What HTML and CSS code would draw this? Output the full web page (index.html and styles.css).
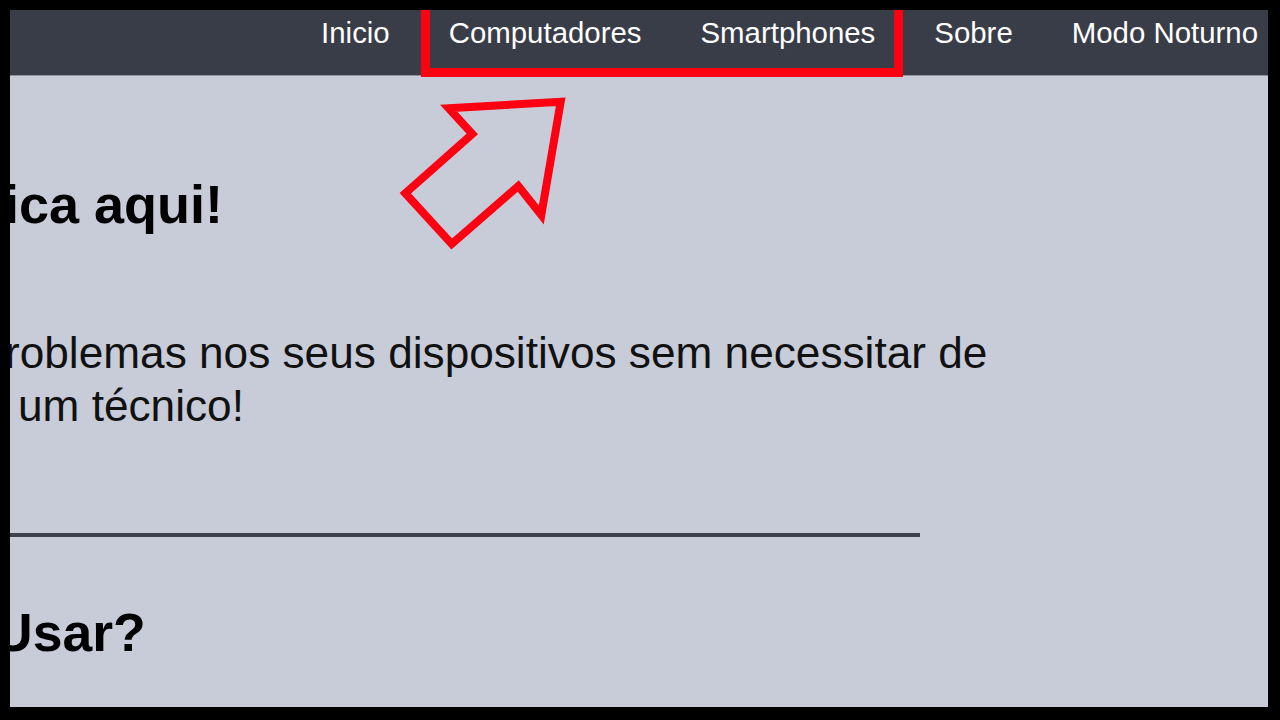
FILE: index.html
```html
<!DOCTYPE html>
<html lang="pt">
<head>
<meta charset="utf-8">
<title>Ajuda técnica</title>
<link rel="stylesheet" href="styles.css">
</head>
<body>
<div class="frame">
  <nav class="nav">
    <a class="nav-link" href="#">Inicio</a>
    <a class="nav-link" href="#">Computadores</a>
    <a class="nav-link" href="#">Smartphones</a>
    <a class="nav-link" href="#">Sobre</a>
    <a class="nav-link" href="#">Modo Noturno</a>
  </nav>
  <div class="highlight-box"></div>
  <svg class="arrow" width="200" height="180" viewBox="0 0 200 180">
    <polygon points="58.7,18.3 170.7,11.7 151.3,125 128.3,96 61.7,154 15.3,103.3 82.3,44" fill="none" stroke="#ff0012" stroke-width="8" stroke-linejoin="miter" stroke-miterlimit="10"/>
  </svg>
  <main class="content">
    <h1 class="title">ica aqui!</h1>
    <p class="lead">
      <span class="line">roblemas nos seus dispositivos sem necessitar de</span>
      <span class="line line-2">um técnico!</span>
    </p>
    <hr class="divider">
    <h2 class="subtitle">Usar?</h2>
  </main>
</div>
</body>
</html>
```

FILE: styles.css
```css
html, body {
  margin: 0;
  padding: 0;
  background: #000;
}
body {
  padding: 10px 12px 13px 10px;
  font-family: "Liberation Sans", Arial, sans-serif;
}
.frame {
  position: relative;
  height: 697px;
  overflow: hidden;
  background: #c7ccd8;
}
.nav {
  height: 65px;
  background: #393d47;
  border-bottom: 1px solid #8e929c;
  display: flex;
  justify-content: flex-end;
  align-items: flex-start;
  gap: 59px;
  padding-right: 10px;
}
.nav-link {
  color: #fff;
  text-decoration: none;
  font-size: 29.4px;
  line-height: 33px;
  padding-top: 6px;
}
.highlight-box {
  position: absolute;
  left: 411px;
  top: -10px;
  width: 482px;
  height: 77px;
  box-sizing: border-box;
  border: 9px solid #ff0012;
}
.arrow {
  position: absolute;
  left: 380px;
  top: 80px;
}
.content {
  display: flex;
  flex-direction: column;
  align-items: flex-start;
}
.title {
  margin: 97px 0 0 -6px;
  font-size: 54px;
  line-height: 62px;
  font-weight: bold;
  color: #000;
}
.lead {
  margin: 91px 0 0 -5px;
  font-size: 44.2px;
  line-height: 53px;
  color: #111;
}
.line {
  display: block;
  white-space: nowrap;
}
.line-2 {
  padding-left: 13px;
}
.divider {
  margin: 101px 0 0 0;
  width: 910px;
  height: 4px;
  border: 0;
  background: #3c414b;
}
.subtitle {
  margin: 66px 0 0 -16px;
  font-size: 53.5px;
  line-height: 60px;
  font-weight: bold;
  color: #000;
}
```
